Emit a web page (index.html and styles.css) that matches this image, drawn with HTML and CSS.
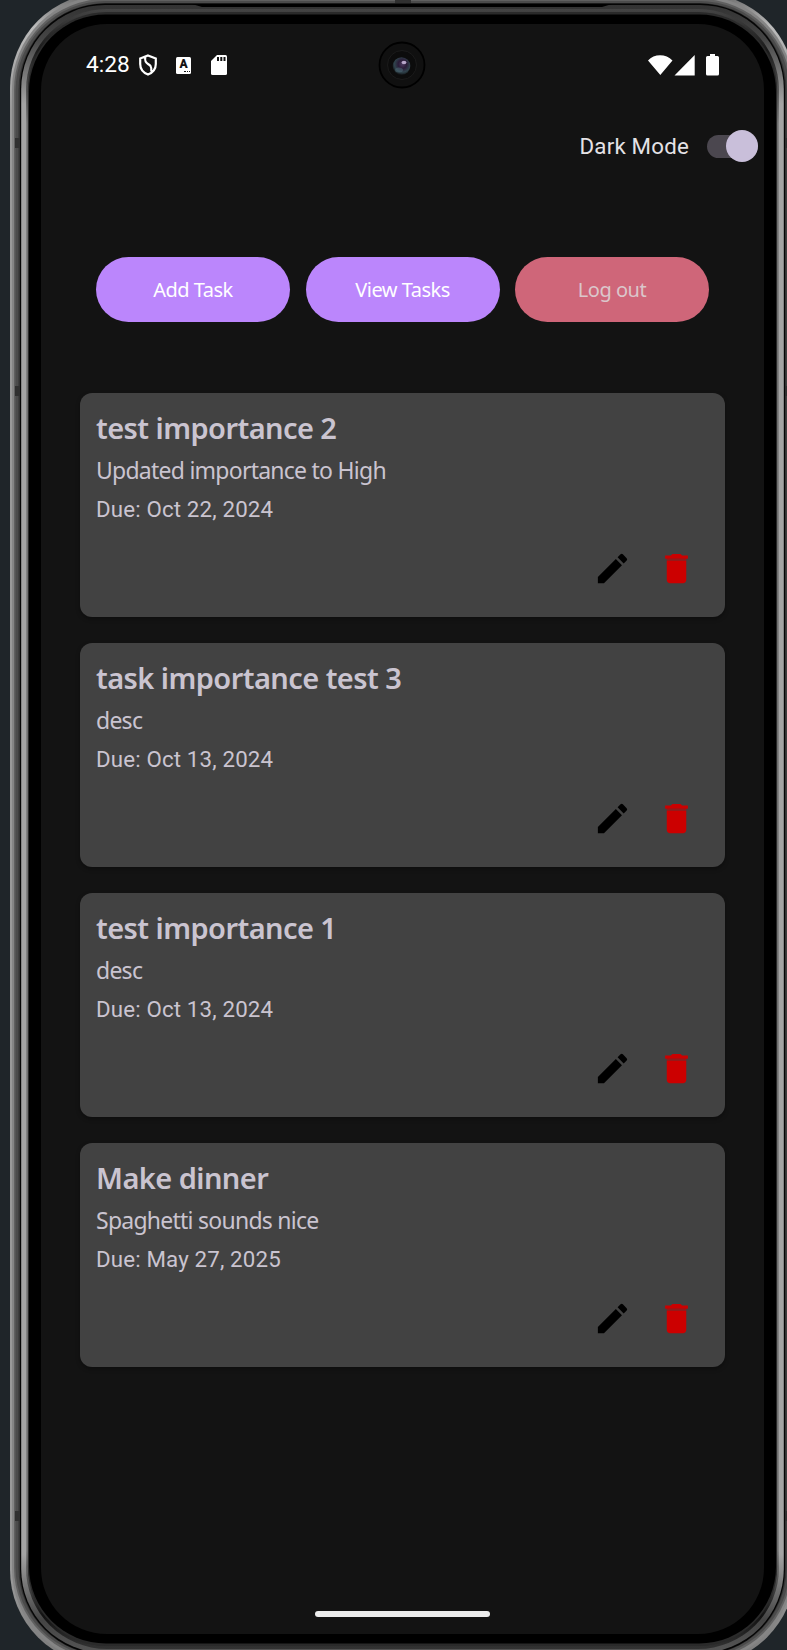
FILE: index.html
```html
<!DOCTYPE html>
<html lang="en">
<head>
<meta charset="utf-8">
<title>Tasks</title>
<link rel="stylesheet" href="styles.css">
</head>
<body>
<svg class="defs" width="0" height="0" aria-hidden="true">
  <symbol id="pencil" viewBox="0 0 24 24"><path d="M3 17.25V21h3.75L17.81 9.94l-3.75-3.75L3 17.25zM20.71 7.04a1 1 0 0 0 0-1.41l-2.34-2.34a1 1 0 0 0-1.41 0l-1.83 1.83 3.75 3.75 1.83-1.83z"/></symbol>
  <symbol id="trash" viewBox="0 0 24 24"><path d="M6 19c0 1.1.9 2 2 2h8c1.1 0 2-.9 2-2V7H6z"/><path d="M19 4h-3.5l-1-1h-5l-1 1H5v2h14z"/><path d="M6 6h12v1H6z" opacity=".6"/></symbol>
</svg>
<div class="stage">
  <svg class="frame" width="787" height="1650" viewBox="0 0 787 1650" aria-hidden="true">
    <defs>
      <linearGradient id="rim" x1="0" x2="0" y1="0" y2="1"><stop offset="0" stop-color="#666"/><stop offset=".02" stop-color="#bbb"/><stop offset=".07" stop-color="#999"/><stop offset=".95" stop-color="#999"/><stop offset="1" stop-color="#777"/></linearGradient>
      <linearGradient id="ridge" x1="0" x2="0" y1="0" y2="1"><stop offset="0" stop-color="#333"/><stop offset=".02" stop-color="#444"/><stop offset=".06" stop-color="#a4a4a4"/><stop offset=".94" stop-color="#a4a4a4"/><stop offset=".98" stop-color="#444"/><stop offset="1" stop-color="#555"/></linearGradient>
      <linearGradient id="ridge2" x1="0" x2="0" y1="0" y2="1"><stop offset="0" stop-color="#444"/><stop offset=".025" stop-color="#1a1a1a"/><stop offset=".07" stop-color="#828282"/><stop offset=".94" stop-color="#828282"/><stop offset=".98" stop-color="#111"/><stop offset="1" stop-color="#333"/></linearGradient>
    </defs>
    <rect x="10" y="-7" width="785" height="1672" rx="95" fill="url(#rim)"/>
    <rect x="12" y="-4" width="781" height="1666" rx="93" fill="#858585"/>
    <rect x="14" y="-1" width="777" height="1660" rx="91" fill="#606060"/>
    <rect x="15.5" y="1" width="774" height="1656" rx="90" fill="#4b4b4b"/>
    <rect x="18.5" y="3" width="768" height="1652" rx="87" fill="#333"/>
    <path d="M15 138h5v10h-5zM15 386h5v10h-5zM15 1511h5v10h-5zM785 138h2v10h-2zM785 386h2v10h-2zM785 1511h2v10h-2zM395 0h16v4h-16z" fill="#303030"/>
    <rect x="20" y="3.5" width="765" height="1651" rx="85" fill="#050505"/>
    <rect x="21.200" y="5" width="762.600" height="1648" rx="84" fill="url(#ridge)"/>
    <path d="M192 4h420l-10 3H202z" fill="#000"/>
    <rect x="26" y="9" width="753" height="1640" rx="81" fill="url(#ridge2)"/>
    <rect x="27.800" y="12" width="749.400" height="1634" rx="79" fill="#2a2a2a"/>
    <rect x="29" y="14.500" width="747" height="1629" rx="77" fill="#000"/>
  </svg>
  <main class="screen">
    <header class="status">
      <span class="clock">4:28</span>
      <svg class="shield" width="18" height="22" viewBox="0 0 18 22" fill="none" stroke="#fff" stroke-width="2.200"><path d="M9 1.400 16.800 4.500V10c0 5-3.200 8.700-7.800 10.600C4.400 18.700 1.200 15 1.200 10V4.500zM6.300 3C5 9.500 9.500 9.500 11.500 12c1 1.500 1 3 .8 5.500"/></svg>
      <span class="badge"><b>A</b><i></i></span>
      <svg class="sd" width="16" height="20" viewBox="0 0 16 20"><path d="M6 0h8.500A1.500 1.500 0 0 1 16 1.500v17a1.500 1.500 0 0 1-1.500 1.500h-13A1.500 1.500 0 0 1 0 18.500V6z" fill="#fff"/><path d="M6 2h2v4H6zm3.300 0h2v4h-2zm3.200 0h2v4h-2z" fill="#131313"/></svg>
      <svg class="signal" width="72" height="22" viewBox="0 0 72 22" fill="#fff"><path d="M0 6.500C6-.5 18-.5 24.500 6.500L12.300 21zM26.500 21.500 46.700 1v20.500zM59.500 2H62V0h5v2h2.500a1.500 1.500 0 0 1 1.500 1.500v16.500a1.500 1.500 0 0 1-1.500 1.500h-10a1.500 1.500 0 0 1-1.500-1.500V3.500A1.500 1.500 0 0 1 59.500 2z"/></svg>
    </header>
    <svg class="camera" width="48" height="48" viewBox="0 0 48 48">
      <defs><radialGradient id="lens" cx=".55" cy=".4" r=".6"><stop offset="0" stop-color="#4b3a5e"/><stop offset=".4" stop-color="#2a1d38"/><stop offset=".75" stop-color="#30434c"/><stop offset="1" stop-color="#15191c"/></radialGradient></defs>
      <circle cx="24" cy="24" r="22.500" fill="#101010" stroke="#000" stroke-width="1.800"/>
      <circle cx="24" cy="24" r="14.500" fill="#0c0c0c" stroke="#1b1b1b"/>
      <circle cx="23.500" cy="25" r="8.800" fill="url(#lens)"/>
      <ellipse cx="26" cy="21.500" rx="2.400" ry="1.800" fill="#b7a6c9"/>
      <ellipse cx="21" cy="29" rx="4" ry="2.500" fill="#4e6c77" opacity=".5"/>
    </svg>
    <div class="mode"><span>Dark Mode</span><span class="switch"></span></div>
    <nav class="actions">
      <button class="btn">Add Task</button>
      <button class="btn">View Tasks</button>
      <button class="btn logout">Log out</button>
    </nav>
    <section class="list">
      <article class="card">
        <h2>test importance 2</h2><p class="desc">Updated importance to High</p><p class="due">Due: Oct 22, 2024</p>
        <div class="tools"><svg><use href="#pencil"/></svg><svg class="del"><use href="#trash"/></svg></div>
      </article>
      <article class="card">
        <h2>task importance test 3</h2><p class="desc">desc</p><p class="due">Due: Oct 13, 2024</p>
        <div class="tools"><svg><use href="#pencil"/></svg><svg class="del"><use href="#trash"/></svg></div>
      </article>
      <article class="card">
        <h2>test importance 1</h2><p class="desc">desc</p><p class="due">Due: Oct 13, 2024</p>
        <div class="tools"><svg><use href="#pencil"/></svg><svg class="del"><use href="#trash"/></svg></div>
      </article>
      <article class="card">
        <h2>Make dinner</h2><p class="desc">Spaghetti sounds nice</p><p class="due">Due: May 27, 2025</p>
        <div class="tools"><svg><use href="#pencil"/></svg><svg class="del"><use href="#trash"/></svg></div>
      </article>
    </section>
    <div class="home"></div>
  </main>
</div>
</body>
</html>
```

FILE: styles.css
```css
* { box-sizing: border-box; }
body { margin: 0; background: #1f2529; font-family: Roboto, "Liberation Sans", sans-serif; }
.defs { position: absolute; }
.stage { display: grid; width: 787px; height: 1650px; overflow: hidden; }
.frame, .screen { grid-area: 1 / 1; }
.screen {
  position: relative;
  display: flex;
  flex-direction: column;
  width: 723px;
  height: 1610px;
  margin: 24px 0 0 41px;
  border-radius: 66px;
  background: #131313;
}
.status { display: flex; align-items: center; height: 82px; padding: 0 44px 0 45px; color: #fff; }
.clock { width: 53px; padding-bottom: 1px; font-size: 22.700px; }
.shield { margin-right: 19px; }
.badge {
  display: flex; flex-direction: column; align-items: center;
  width: 15px; height: 17px; margin-right: 20px;
  border-radius: 1.500px; background: #fff; color: #131313;
}
.badge b { font-size: 12px; line-height: 14px; font-weight: 900; }
.badge i { width: 6px; margin-left: 7px; border-top: 1px dotted #131313; }
.signal { margin-left: auto; }
.camera { position: absolute; left: 337px; top: 17px; }
.mode {
  display: flex; align-items: center; justify-content: flex-end;
  height: 32px; margin-top: 24px; padding-right: 6px;
  color: #e4e2e6; font-size: 22.300px; letter-spacing: 0.200px;
}
.switch {
  display: flex; align-items: center; justify-content: flex-end;
  width: 51px; height: 23px; margin-left: 18px;
  border-radius: 12px; background: #4b474f;
}
.switch::after { content: ""; width: 32px; height: 32px; border-radius: 50%; background: #c9bfda; }
.actions { display: grid; grid-template-columns: repeat(3, 194px); gap: 15.500px; margin: 95px 0 0 55px; }
.btn {
  height: 64.500px; padding: 0; border: 0; border-radius: 33px;
  background: #bb86fc; color: #fff;
  font: 400 20px "Noto Sans", sans-serif;
  letter-spacing: -0.500px;
}
.logout { background: #cf6679; color: #dbc6cb; }
.list { display: grid; gap: 26.200px; margin: 71px 39px 0 39px; }
.card {
  display: flex; flex-direction: column;
  height: 224px; padding: 15px 16px;
  border-radius: 12px; background: #424242; color: #cac4d0;
  box-shadow: 0 2px 4px rgba(0, 0, 0, .35);
}
.card h2 { margin: 0; font: 600 29px/40px "Noto Sans", sans-serif; letter-spacing: -0.560px; }
.card p { margin: 0; }
.desc { font: 400 23px/44px "Noto Sans", sans-serif; letter-spacing: -0.750px; }
.due { padding-top: 1px; font-size: 22.300px; line-height: 32px; letter-spacing: 0.150px; }
.tools { display: flex; justify-content: flex-end; gap: 25px; margin-top: 24px; padding-right: 13px; }
.tools svg { width: 39px; height: 39px; fill: #000; }
.tools .del { fill: #c00; }
.home { width: 175px; height: 6px; margin: auto auto 17px 274px; border-radius: 3px; background: #ececec; }
```
